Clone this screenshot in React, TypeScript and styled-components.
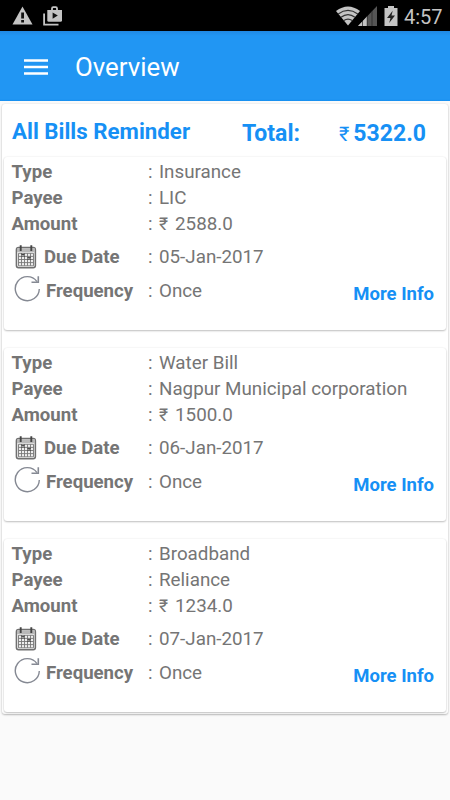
import React from "react";
import styled, { createGlobalStyle } from "styled-components";

const GlobalStyle = createGlobalStyle`
  * { box-sizing: border-box; }
  body { margin: 0; background: #fafafa; font-family: Roboto, sans-serif; color: #757575; }
`;

const Screen = styled.div`
  height: 800px;
  background: #fafafa;
  overflow: hidden;
`;

const StatusBar = styled.header`
  height: 31px;
  background: #000;
  display: flex;
  align-items: center;
  justify-content: space-between;
  padding: 0 8px 0 12px;
  color: #c4c4c4;
  svg { display: block; flex: none; }
`;

const StatusGroup = styled.div<{ $gap: number }>`
  display: flex;
  align-items: center;
  gap: ${(p) => p.$gap}px;
`;

const Clock = styled.time`
  width: 38px;
  font-size: 20px;
  line-height: 30px;
  padding-top: 2px;
  white-space: nowrap;
`;

const AppBar = styled.div`
  height: 70px;
  background: linear-gradient(#2089e3 0, #2196f3 5px, #2196f3 68px, #168ff0 70px);
  display: flex;
  align-items: center;
  padding: 1px 23.5px 0;
  color: #fff;
`;

const MenuButton = styled.button`
  border: 0;
  padding: 0;
  background: none;
  width: 24px;
  display: flex;
  svg { display: block; }
`;

const Title = styled.h1`
  margin: 0 0 0 27.5px;
  font-size: 25.8px;
  font-weight: 400;
  line-height: 32px;
`;

const Panel = styled.main`
  margin: 3px 2px 0;
  height: 610px;
  padding: 0 2px;
  background: #fff;
  border-radius: 3px;
  box-shadow: 0 1px 2px rgba(0, 0, 0, 0.24), 0 0 2px rgba(0, 0, 0, 0.1);
`;

const Summary = styled.div`
  height: 53px;
  display: flex;
  align-items: center;
  padding: 4px 20px 0 8px;
  color: #1690f5;
  font-size: 23px;
  line-height: 28px;
  font-weight: 700;
`;

const Heading = styled.h2`
  margin: 0 0 3px;
  width: 230px;
  font-size: 22.3px;
  line-height: 28px;
  white-space: nowrap;
`;

const TotalLabel = styled.span`
  padding-top: 2px;
`;

const TotalValue = styled.span`
  display: flex;
  align-items: center;
  gap: 4px;
  margin-left: auto;
  padding-top: 2px;
`;

const Rupee = styled.span<{ $size: number }>`
  font-size: ${(p) => p.$size}px;
  font-weight: 400;
`;

const BillCard = styled.section`
  height: 173px;
  margin-bottom: 18px;
  padding: 2px 12px 0 7.5px;
  background: #fff;
  border-radius: 3px;
  box-shadow: 0 1px 2px rgba(0, 0, 0, 0.24), 0 0 2px rgba(0, 0, 0, 0.08);
`;

const Row = styled.div<{ $height: number }>`
  height: ${(p) => p.$height}px;
  display: flex;
  align-items: center;
  font-size: 18.8px;
  white-space: nowrap;
`;

const Label = styled.div<{ $gap?: number; $indent?: number }>`
  width: 136.5px;
  padding-left: ${(p) => p.$indent ?? 0}px;
  display: flex;
  align-items: center;
  gap: ${(p) => p.$gap ?? 0}px;
  font-size: 18.6px;
  font-weight: 700;
  flex: none;
  svg { flex: none; }
`;

const Colon = styled.span`
  width: 11px;
  flex: none;
`;

const Value = styled.span`
  display: flex;
  align-items: center;
  gap: 7px;
`;

const MoreInfo = styled.a`
  margin: 5px 0 0 auto;
  color: #1690f5;
  font-size: 18.5px;
  font-weight: 700;
`;

const MenuIcon = () => (
  <svg width="24" height="16" viewBox="0 0 24 16">
    <path d="M0 1.5H24M0 8H24M0 14.5H24" stroke="#fff" strokeWidth="2.4" />
  </svg>
);

const WarningIcon = () => (
  <svg width="21" height="19" viewBox="0 0 21 19">
    <path d="M10.5 0.5 20.5 18.5H0.5Z" fill="#c4c4c4" />
    <path d="M9.2 6.5h2.8v6H9.2zM9.2 14h2.8v2.5H9.2z" fill="#111" />
  </svg>
);

const StoreIcon = () => (
  <svg width="20" height="20" viewBox="0 0 20 20">
    <path d="M1.1 7.5V18.6H15.5" fill="none" stroke="#c4c4c4" strokeWidth="1.8" />
    <path d="M9 4V2.5Q9 1.2 10.2 1.2H12.8Q14 1.2 14 2.5V4" fill="none" stroke="#c4c4c4" strokeWidth="1.8" />
    <path d="M4.3 4H19V14.2Q19 15.7 17.5 15.7H5.8Q4.3 15.7 4.3 14.2Z" fill="#c4c4c4" />
    <path d="M9.6 6.5 14.8 9.6 9.6 12.7Z" fill="#111" />
  </svg>
);

const NetworkIcon = () => (
  <svg width="41" height="20" viewBox="0 0 41 20">
    <path d="M0 5Q12-4 24 5L12 19.5Z" fill="#c4c4c4" />
    <path d="M2.2 8Q12 .8 21.8 8M5 11.3Q12 6 19 11.3M7.8 14.6Q12 11.5 16.2 14.6" fill="none" stroke="#333" strokeWidth="1.2" />
    <path d="M22 20 41 0V20Z" fill="#555" />
    <path d="M22 20 31 10.5V20Z" fill="#c4c4c4" />
    <path d="M26.5 15V20M31.2 10V20M36 5V20" stroke="#222" strokeWidth=".7" />
  </svg>
);

const BatteryIcon = () => (
  <svg width="14" height="20" viewBox="0 0 14 20">
    <path d="M4 0H10V2H13.5V20H.5V2H4Z" fill="#c4c4c4" />
    <path d="M8.7 4.7 3 12H6.5L5.2 17 11 9.6H7.5Z" fill="#222" />
  </svg>
);

const CalendarIcon = () => (
  <svg width="22" height="24" viewBox="0 0 22 24">
    <rect x="1.4" y="2.5" width="19" height="20.3" rx="2.2" fill="#eee" stroke="#707070" strokeWidth="1.5" />
    <path d="M2 3.3H20V7H2Z" fill="#b8b8b8" />
    <path d="M5.7 .3V6M16.3 .3V6" stroke="#444" strokeWidth="1.9" />
    <path d="M3.5 8.3H18.5V20.8H3.5ZM3.5 11.4H18.5M3.5 14.5H18.5M3.5 17.6H18.5M6.5 8.3V20.8M9.5 8.3V20.8M12.5 8.3V20.8M15.5 8.3V20.8" fill="none" stroke="#777" strokeWidth=".9" />
    <path d="M6.3 8.7 9.7 11.7M9.5 8.7 6.5 11.7M12.5 11.8 15.7 14.7M15.7 11.8 12.5 14.7" stroke="#444" strokeWidth="1.1" />
  </svg>
);

const CalendarSlot = styled.span`
  display: flex;
  margin-bottom: 1px;
`;

const RefreshGlyph = styled.svg`
  margin-bottom: 6px;
`;

const RefreshIcon = () => (
  <RefreshGlyph width="26" height="27" viewBox="0 0 26 27">
    <path d="M25.3 14A12 12 0 1 1 23 6.6" fill="none" stroke="#858993" strokeWidth="1.4" />
    <path d="M24.3 1.3V7.3H17.5" fill="none" stroke="#858993" strokeWidth="1.6" />
  </RefreshGlyph>
);

interface Bill {
  type: string;
  payee: string;
  amount: string;
  due: string;
  frequency: string;
}

const bills: Bill[] = [
  { type: "Insurance", payee: "LIC", amount: "2588.0", due: "05-Jan-2017", frequency: "Once" },
  { type: "Water Bill", payee: "Nagpur Municipal corporation", amount: "1500.0", due: "06-Jan-2017", frequency: "Once" },
  { type: "Broadband", payee: "Reliance", amount: "1234.0", due: "07-Jan-2017", frequency: "Once" },
];

const BillItem = ({ bill }: { bill: Bill }) => (
  <BillCard>
    <Row $height={26}><Label>Type</Label><Colon>:</Colon><Value>{bill.type}</Value></Row>
    <Row $height={26}><Label>Payee</Label><Colon>:</Colon><Value>{bill.payee}</Value></Row>
    <Row $height={26}>
      <Label>Amount</Label><Colon>:</Colon>
      <Value><Rupee $size={17.5}>₹</Rupee>{bill.amount}</Value>
    </Row>
    <Row $height={40}>
      <Label $gap={7} $indent={3.5}><CalendarSlot><CalendarIcon /></CalendarSlot>Due Date</Label>
      <Colon>:</Colon><Value>{bill.due}</Value>
    </Row>
    <Row $height={28}>
      <Label $gap={6} $indent={2.5}><RefreshIcon />Frequency</Label>
      <Colon>:</Colon><Value>{bill.frequency}</Value>
      <MoreInfo>More Info</MoreInfo>
    </Row>
  </BillCard>
);

export default function App() {
  return (
    <Screen>
      <GlobalStyle />
      <StatusBar>
        <StatusGroup $gap={10}><WarningIcon /><StoreIcon /></StatusGroup>
        <StatusGroup $gap={6.5}>
          <NetworkIcon />
          <BatteryIcon />
          <Clock>4:57</Clock>
        </StatusGroup>
      </StatusBar>
      <AppBar>
        <MenuButton aria-label="Menu"><MenuIcon /></MenuButton>
        <Title>Overview</Title>
      </AppBar>
      <Panel>
        <Summary>
          <Heading>All Bills Reminder</Heading>
          <TotalLabel>Total:</TotalLabel>
          <TotalValue><Rupee $size={20}>₹</Rupee>5322.0</TotalValue>
        </Summary>
        {bills.map((bill) => <BillItem key={bill.type} bill={bill} />)}
      </Panel>
    </Screen>
  );
}
